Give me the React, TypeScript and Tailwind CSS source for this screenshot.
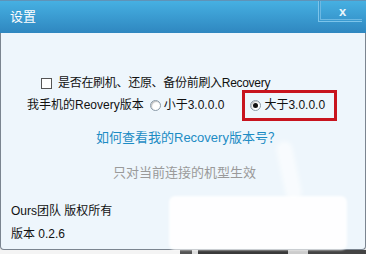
import React from "react";

const font = { fontFamily: '"Liberation Sans", "Noto Sans CJK SC", sans-serif' };

function Radio({ checked }: { checked?: boolean }) {
  return (
    <span className="inline-flex h-[11px] w-[11px] items-center justify-center rounded-full border border-[#8a9aa8] bg-white shadow-[inset_1px_1px_1px_rgba(0,0,0,0.25)]">
      {checked && <span className="h-[5px] w-[5px] rounded-full bg-[#111]" />}
    </span>
  );
}

export default function App() {
  return (
    <div className="relative h-[254px] w-[366px] overflow-hidden bg-[#e9e9e9] text-[12px] leading-[16px]" style={font}>
      {/* title bar */}
      <div className="relative flex h-[33px] items-center border-t border-[#5f93b8] bg-gradient-to-b from-[#46b0e2] to-[#2f87c0] pl-[10px] text-[13px] text-white">
        设置
        <div className="absolute right-[4px] top-0 flex h-[21px] w-[44px] items-center justify-center border-b border-l border-[#7cc4ea] shadow-[inset_1px_-1px_0_#3a9ad0,inset_2px_-2px_0_#6cb8e2]">
          <span className="ml-[4px] text-[13px] font-bold leading-none text-[#eaf6fc]">x</span>
        </div>
      </div>

      {/* body */}
      <div className="relative h-[217px] rounded-b-[4px] border-x border-b border-[#7b8590] bg-[#eef6fc] text-[#111]">
        <div className="flex items-center gap-[6px] pl-[40px] pt-[42px]">
          <span className="h-[11px] w-[11px] border border-[#555] bg-white" />
          <span className="tracking-[-0.3px]">是否在刷机、还原、备份前刷入Recovery</span>
        </div>

        <div className="mt-[6px] flex items-center pl-[26px]">
          <span>我手机的Reovery版本</span>
          <span className="ml-[6px] flex items-center gap-[3px]">
            <Radio />
            <span>小于3.0.0.0</span>
          </span>
          <span className="relative ml-[18px] flex items-center gap-[3px] pl-[8px]">
            <span className="absolute left-0 top-[-7px] h-[31px] w-[95px] border-[3px] border-[#c8141e]" />
            <Radio checked />
            <span>大于3.0.0.0</span>
          </span>
        </div>

        <div className="mt-[17px] pl-[95px] text-[13px] text-[#1d8cc4]">如何查看我的Recovery版本号？</div>

        <div className="mt-[19px] pl-[112px] text-[13px] text-[#9a9a9a]">只对当前连接的机型生效</div>

        <div className="mt-[22px] pl-[10px]">Ours团队 版权所有</div>
        <div className="mt-[7px] pl-[10px]">版本 0.2.6</div>

        {/* white smudge over the lower right */}
        <div className="absolute left-[168px] top-[163px] h-[54px] w-[178px] rounded-[6px] bg-white/90 blur-[1px]" />
        <div className="absolute left-[280px] top-[108px] h-[60px] w-[16px] rotate-[-12deg] rounded-full bg-white/60 blur-[2px]" />
      </div>

      {/* window below */}
      <div className="flex h-[4px]">
        <div className="w-[180px] bg-[#f4f4f4]" />
        <div className="w-[12px] bg-[#555]" />
        <div className="w-[6px] bg-[#ddd]" />
        <div className="w-[90px] bg-[#3a3a3a]" />
        <div className="w-[20px] bg-[#ccc]" />
        <div className="flex-1 bg-[#444]" />
      </div>
    </div>
  );
}
